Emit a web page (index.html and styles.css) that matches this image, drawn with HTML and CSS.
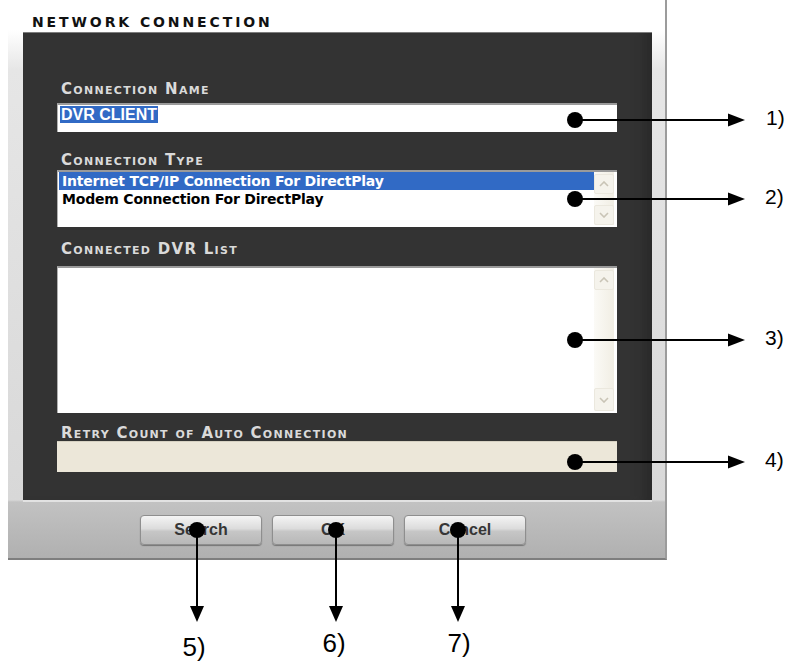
FILE: index.html
```html
<!DOCTYPE html>
<html lang="en">
<head>
    <meta charset="UTF-8">
    <meta name="viewport" content="width=device-width, initial-scale=1.0">
    <title>Network Connection</title>
    <link rel="stylesheet" href="styles.css">
</head>
<body>
    <div class="stage">
        <div class="dialog">
            <div class="title">NETWORK CONNECTION</div>

            <div class="panel">
                <div class="label label-name">Connection Name</div>
                <div class="textbox">
                    <span class="selected-text">DVR CLIENT</span>
                </div>

                <div class="label label-type">Connection Type</div>
                <div class="listbox list-type">
                    <div class="list-items">
                        <div class="item item-active">Internet TCP/IP Connection For DirectPlay</div>
                        <div class="item">Modem Connection For DirectPlay</div>
                    </div>
                    <div class="scrollbar">
                        <div class="scroll-btn">
                            <svg width="10" height="6" viewBox="0 0 10 6"><path d="M1 5 L5 1 L9 5" fill="none" stroke="#c9c4b6" stroke-width="1.6"/></svg>
                        </div>
                        <div class="scroll-track"></div>
                        <div class="scroll-btn">
                            <svg width="10" height="6" viewBox="0 0 10 6"><path d="M1 1 L5 5 L9 1" fill="none" stroke="#c9c4b6" stroke-width="1.6"/></svg>
                        </div>
                    </div>
                </div>

                <div class="label label-list">Connected DVR List</div>
                <div class="listbox list-dvr">
                    <div class="list-items"></div>
                    <div class="scrollbar">
                        <div class="scroll-btn">
                            <svg width="10" height="6" viewBox="0 0 10 6"><path d="M1 5 L5 1 L9 5" fill="none" stroke="#c9c4b6" stroke-width="1.6"/></svg>
                        </div>
                        <div class="scroll-track"></div>
                        <div class="scroll-btn scroll-btn-tall">
                            <svg width="10" height="6" viewBox="0 0 10 6"><path d="M1 1 L5 5 L9 1" fill="none" stroke="#c9c4b6" stroke-width="1.6"/></svg>
                        </div>
                    </div>
                </div>

                <div class="label label-retry">Retry Count of Auto Connection</div>
                <div class="retrybox"></div>
            </div>

            <div class="buttons">
                <button class="btn">Search</button>
                <button class="btn">OK</button>
                <button class="btn">Cancel</button>
            </div>
        </div>

        <svg class="callouts" width="788" height="661" viewBox="0 0 788 661">
            <g fill="#000" stroke="#000" stroke-width="2">
                <circle cx="575" cy="120" r="8" stroke="none"/>
                <line x1="575" y1="120" x2="730" y2="120"/>
                <polygon points="728,113.5 745,120 728,126.5" stroke="none"/>

                <circle cx="575" cy="199" r="8" stroke="none"/>
                <line x1="575" y1="199" x2="730" y2="199"/>
                <polygon points="728,192.5 745,199 728,205.5" stroke="none"/>

                <circle cx="575" cy="340" r="8" stroke="none"/>
                <line x1="575" y1="340" x2="730" y2="340"/>
                <polygon points="728,333.5 745,340 728,346.5" stroke="none"/>

                <circle cx="575" cy="462" r="8" stroke="none"/>
                <line x1="575" y1="462" x2="730" y2="462"/>
                <polygon points="728,455.5 745,462 728,468.5" stroke="none"/>

                <circle cx="197" cy="530" r="8" stroke="none"/>
                <line x1="197" y1="530" x2="197" y2="608"/>
                <polygon points="190,606 204,606 197,622" stroke="none"/>

                <circle cx="336" cy="530" r="8" stroke="none"/>
                <line x1="336" y1="530" x2="336" y2="608"/>
                <polygon points="329,606 343,606 336,622" stroke="none"/>

                <circle cx="458" cy="530" r="8" stroke="none"/>
                <line x1="458" y1="530" x2="458" y2="608"/>
                <polygon points="451,606 465,606 458,622" stroke="none"/>
            </g>
            <g class="callout-num">
                <text x="766" y="125">1)</text>
                <text x="765" y="204">2)</text>
                <text x="765" y="345">3)</text>
                <text x="765" y="467">4)</text>
            </g>
            <g class="callout-num callout-num-big">
                <text x="194" y="656">5)</text>
                <text x="334" y="652">6)</text>
                <text x="459" y="652">7)</text>
            </g>
        </svg>
    </div>
</body>
</html>
```

FILE: styles.css
```css
body {
    margin: 0;
    background: #fff;
    font-family: "Liberation Sans", Arial, sans-serif;
}
.stage {
    position: relative;
    width: 788px;
    height: 661px;
    overflow: hidden;
}
.dialog {
    margin-left: 8px;
    width: 657px;
    height: 558px;
    border-right: 2px solid #9c9c9c;
    border-bottom: 2px solid #7e7e7e;
    background: linear-gradient(to bottom, #fff 0, #fff 30px, #e6e6e6 70px, #d8d8d8 500px, #c2c2c2 502px, #b0b0b0 100%);
}
.title {
    box-sizing: border-box;
    height: 32px;
    padding: 14px 0 0 24px;
    font-family: "DejaVu Sans", sans-serif;
    font-weight: bold;
    font-size: 14px;
    line-height: 16px;
    letter-spacing: 2.9px;
    color: #111;
}
.panel {
    box-sizing: border-box;
    margin-left: 15px;
    width: 629px;
    height: 470px;
    padding: 49px 0 0 34px;
    background: #333;
    border-top: 1px solid #7c7c7c;
    border-bottom: 2px solid #e2e2e2;
    box-shadow: inset -18px 0 12px -10px #2a2a2a;
}
.label {
    font-family: "DejaVu Sans", sans-serif;
    font-weight: bold;
    font-variant: small-caps;
    font-size: 15px;
    line-height: 14px;
    letter-spacing: 1.3px;
    color: #dadada;
    padding-left: 4px;
}
.label-name { margin-top: 0; }
.label-type { margin-top: 21px; }
.label-list { margin-top: 15px; }
.label-retry { margin-top: 13px; }

.textbox {
    box-sizing: border-box;
    width: 560px;
    height: 29px;
    margin-top: 7px;
    padding: 1px 0 0 2px;
    background: #fff;
    border-top: 2px solid #9a9a9a;
    border-left: 1px solid #b0b0b0;
}
.selected-text {
    display: inline-block;
    padding: 0 1px;
    background: #316ac5;
    color: #fff;
    font-weight: bold;
    font-size: 16px;
    line-height: 17px;
}
.listbox {
    box-sizing: border-box;
    display: flex;
    width: 560px;
    background: #fff;
    border-top: 2px solid #9a9a9a;
    border-left: 1px solid #b0b0b0;
    padding: 0 3px 2px 1px;
}
.list-type {
    height: 57px;
    margin-top: 3px;
}
.list-dvr {
    height: 147px;
    margin-top: 10px;
}
.list-items {
    flex: 1;
}
.item {
    height: 18px;
    padding-left: 3px;
    font-family: "DejaVu Sans", sans-serif;
    font-weight: bold;
    font-size: 14px;
    line-height: 18px;
    letter-spacing: -0.2px;
    color: #000;
}
.item-active {
    background: #316ac5;
    color: #fff;
}
.scrollbar {
    display: flex;
    flex-direction: column;
    width: 20px;
    padding-top: 2px;
    background: linear-gradient(to right, #fbfaf6, #f1eee4);
}
.scroll-btn {
    display: flex;
    align-items: center;
    justify-content: center;
    height: 18px;
    background: #f5f3ec;
    border: 1px solid #ebe8de;
    border-radius: 2px;
}
.scroll-btn-tall {
    height: 21px;
}
.scroll-track {
    flex: 1;
}
.retrybox {
    width: 560px;
    height: 31px;
    margin-top: 1px;
    background: #ece7d9;
    border-top: 1px solid #d6d1c2;
    box-sizing: border-box;
}
.buttons {
    display: flex;
    gap: 10px;
    padding: 13px 0 0 132px;
}
.btn {
    width: 122px;
    height: 30px;
    padding: 0;
    border: 1px solid #8e8e8e;
    border-radius: 4px;
    background: linear-gradient(to bottom, #f4f4f4, #dcdcdc 45%, #c6c6c6 55%, #b8b8b8);
    box-shadow: 0 1px 1px rgba(0, 0, 0, 0.35);
    font-family: "Liberation Sans", Arial, sans-serif;
    font-weight: bold;
    font-size: 16px;
    color: #363636;
}
.callouts {
    position: absolute;
    left: 0;
    top: 0;
    pointer-events: none;
}
.callout-num {
    font-family: "Liberation Sans", Arial, sans-serif;
    font-size: 21px;
    fill: #000;
}
.callout-num-big {
    font-size: 26px;
    text-anchor: middle;
}
```
